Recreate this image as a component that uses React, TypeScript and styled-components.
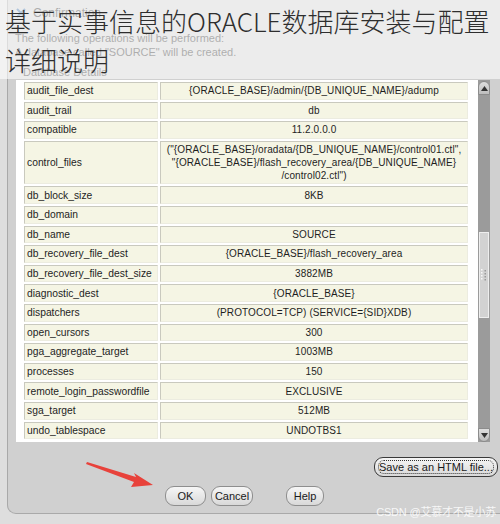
import React from "react";
import styled, { createGlobalStyle } from "styled-components";

const Global = createGlobalStyle`
  html, body { margin: 0; padding: 0; background: #dedede; }
  * { box-sizing: border-box; }
`;

const Page = styled.div`
  position: relative;
  width: 500px;
  height: 524px;
  overflow: hidden;
  background: #dedede;
  font-family: "Liberation Sans", Arial, sans-serif;
`;

const Dialog = styled.div`
  margin-left: 7px;
  width: 500px;
  height: 514px;
  background: #d0d0d0;
  border-left: 1px solid #a9a9a9;
  border-bottom: 1px solid #a9a9a9;
  border-bottom-left-radius: 9px;
  display: flex;
  flex-direction: column;
`;

const Header = styled.div`
  height: 80px;
  padding: 5px 0 0 7px;
  display: flex;
  flex-direction: column;
  color: #333;
  font-size: 11px;
`;

const TitleLine = styled.div`
  display: flex;
  align-items: center;
  gap: 6px;
  height: 16px;
  font-size: 12px;
`;

const InfoLine = styled.div<{ $indent?: number; $top?: number }>`
  margin-left: ${(p) => p.$indent ?? 0}px;
  margin-top: ${(p) => p.$top ?? 0}px;
  line-height: 14px;
`;

const Body = styled.div`
  display: flex;
  margin-left: 8px;
  height: 362px;
`;

const Panel = styled.div`
  width: 462px;
  height: 362px;
  background: #ffffff;
  padding: 0 8px 0 6px;
  overflow: hidden;
`;

const Table = styled.table`
  width: 448px;
  border-collapse: separate;
  border-spacing: 2px;
  margin-top: 0;
  color: #1e1e1e;
  table-layout: fixed;
`;

const NameCell = styled.td`
  width: 134px;
  background: #f5f5e4;
  border: 1px solid;
  border-color: #c9c9be #ecece0 #ecece0 #c9c9be;
  padding: 1.3px 2px;
  font-size: 10.3px;
  line-height: 13px;
  white-space: nowrap;
  overflow: hidden;
`;

const ValueCell = styled.td`
  background: #f5f5e4;
  border: 1px solid;
  border-color: #c9c9be #ecece0 #ecece0 #c9c9be;
  padding: 1.3px 2px;
  font-size: 10px;
  letter-spacing: 0.1px;
  line-height: 13px;
  text-align: center;
  white-space: nowrap;
  overflow: hidden;
`;

const ScrollBar = styled.div`
  width: 12px;
  height: 362px;
  background: #9b9b9b;
  display: flex;
  flex-direction: column;
`;

const ScrollBtn = styled.div<{ $down?: boolean }>`
  height: 14px;
  background: linear-gradient(#dedede, #bdbdbd);
  border: 1px solid #8c8c8c;
  border-radius: ${(p) => (p.$down ? "0 0 6px 6px" : "6px 6px 0 0")};
  display: flex;
  align-items: center;
  justify-content: center;
  margin-top: ${(p) => (p.$down ? "auto" : "1px")};
`;

const Thumb = styled.div`
  margin-top: 137px;
  height: 86px;
  margin-left: 1px;
  margin-right: 1px;
  background: #d2d2d2;
  border: 1px solid #eeeeee;
  display: flex;
  align-items: center;
  justify-content: center;
`;

const Footer = styled.div`
  flex: 1;
  display: flex;
  flex-direction: column;
`;

const SaveRow = styled.div`
  display: flex;
  justify-content: flex-end;
  padding-right: 9px;
  margin-top: 15px;
`;

const ButtonRow = styled.div`
  display: flex;
  margin-top: 9px;
  padding-left: 157px;
`;

const Button = styled.button<{ $w: number; $ml?: number; $strong?: boolean }>`
  width: ${(p) => p.$w}px;
  height: 20px;
  margin-left: ${(p) => p.$ml ?? 0}px;
  padding: 0;
  font-family: "Liberation Sans", Arial, sans-serif;
  font-size: 11px;
  color: #1a1a1a;
  background: linear-gradient(#f6f6f6, #d9d9d9);
  border: 1px solid ${(p) => (p.$strong ? "#3a3a3a" : "#8e8e8e")};
  border-radius: 9px;
  display: flex;
  align-items: center;
  justify-content: center;
`;

const FocusRing = styled.span`
  display: flex;
  align-items: center;
  justify-content: center;
  width: calc(100% - 6px);
  height: 14px;
  border: 1px dotted #333;
  border-radius: 6px;
`;

const Veil = styled.div`
  position: absolute;
  left: 0;
  top: 0;
  width: 500px;
  height: 79px;
  background: rgba(255, 255, 255, 0.6);
`;

const BigTitle = styled.div`
  position: absolute;
  left: 5px;
  top: 1px;
  font-family: "Noto Sans CJK SC", "Noto Sans", sans-serif;
  font-size: 26px;
  font-weight: 300;
  line-height: 39px;
  color: #2e2e2e;
  white-space: nowrap;
`;

const Arrow = styled.svg`
  position: absolute;
  left: 80px;
  top: 455px;
`;

const Watermark = styled.div`
  position: absolute;
  right: 4px;
  bottom: 5px;
  font-family: "Liberation Sans", "Noto Sans CJK SC", sans-serif;
  font-size: 11px;
  color: rgba(255, 255, 255, 0.85);
  letter-spacing: -0.2px;
`;

const rows: [string, React.ReactNode][] = [
  ["audit_file_dest", "{ORACLE_BASE}/admin/{DB_UNIQUE_NAME}/adump"],
  ["audit_trail", "db"],
  ["compatible", "11.2.0.0.0"],
  [
    "control_files",
    <>
      ("{"{"}ORACLE_BASE{"}"}/oradata/{"{"}DB_UNIQUE_NAME{"}"}/control01.ctl",
      <br />
      "{"{"}ORACLE_BASE{"}"}/flash_recovery_area/{"{"}DB_UNIQUE_NAME{"}"}
      <br />
      /control02.ctl")
    </>,
  ],
  ["db_block_size", "8KB"],
  ["db_domain", ""],
  ["db_name", "SOURCE"],
  ["db_recovery_file_dest", "{ORACLE_BASE}/flash_recovery_area"],
  ["db_recovery_file_dest_size", "3882MB"],
  ["diagnostic_dest", "{ORACLE_BASE}"],
  ["dispatchers", "(PROTOCOL=TCP) (SERVICE={SID}XDB)"],
  ["open_cursors", "300"],
  ["pga_aggregate_target", "1003MB"],
  ["processes", "150"],
  ["remote_login_passwordfile", "EXCLUSIVE"],
  ["sga_target", "512MB"],
  ["undo_tablespace", "UNDOTBS1"],
];

export default function App() {
  return (
    <>
      <Global />
      <Page>
        <Dialog>
          <Header>
            <TitleLine>
              <svg width="12" height="12" viewBox="0 0 12 12">
                <path d="M2 2 L10 10 M10 2 L2 10" stroke="#3a6ea5" strokeWidth="2" />
              </svg>
              Confirmation
            </TitleLine>
            <InfoLine $top={10}>The following operations will be performed:</InfoLine>
            <InfoLine>A database called "SOURCE" will be created.</InfoLine>
            <InfoLine $indent={8} $top={6}>Database Details</InfoLine>
          </Header>
          <Body>
            <Panel>
              <Table>
                <tbody>
                  {rows.map(([k, v]) => (
                    <tr key={k}>
                      <NameCell>{k}</NameCell>
                      <ValueCell>{v}</ValueCell>
                    </tr>
                  ))}
                </tbody>
              </Table>
            </Panel>
            <ScrollBar>
              <ScrollBtn>
                <svg width="7" height="5" viewBox="0 0 7 5">
                  <path d="M0 5 L3.5 0 L7 5 Z" fill="#333" />
                </svg>
              </ScrollBtn>
              <Thumb>
                <svg width="6" height="12" viewBox="0 0 6 12">
                  {[0, 3, 6, 9].map((y) => (
                    <g key={y}>
                      <rect x="0" y={y} width="1.5" height="1.5" fill="#f8f8f8" />
                      <rect x="3.5" y={y + 1} width="1.5" height="1.5" fill="#9a9a9a" />
                    </g>
                  ))}
                </svg>
              </Thumb>
              <ScrollBtn $down>
                <svg width="7" height="5" viewBox="0 0 7 5">
                  <path d="M0 0 L7 0 L3.5 5 Z" fill="#333" />
                </svg>
              </ScrollBtn>
            </ScrollBar>
          </Body>
          <Footer>
            <SaveRow>
              <Button $w={124} $strong>
                <FocusRing>Save as an HTML file...</FocusRing>
              </Button>
            </SaveRow>
            <ButtonRow>
              <Button $w={41}>OK</Button>
              <Button $w={42} $ml={5}>Cancel</Button>
              <Button $w={38} $ml={33}>Help</Button>
            </ButtonRow>
          </Footer>
        </Dialog>
        <Veil />
        <BigTitle>
          基于实事信息的ORACLE数据库安装与配置
          <br />
          详细说明
        </BigTitle>
        <Arrow width="80" height="40" viewBox="0 0 80 40">
          <path d="M7 7 L56 22 L54 18 L73 30 L51 32 L54 27 L6 9 Z" fill="#e8423b" />
        </Arrow>
        <Watermark>CSDN @艾慕才不是小苏</Watermark>
      </Page>
    </>
  );
}
